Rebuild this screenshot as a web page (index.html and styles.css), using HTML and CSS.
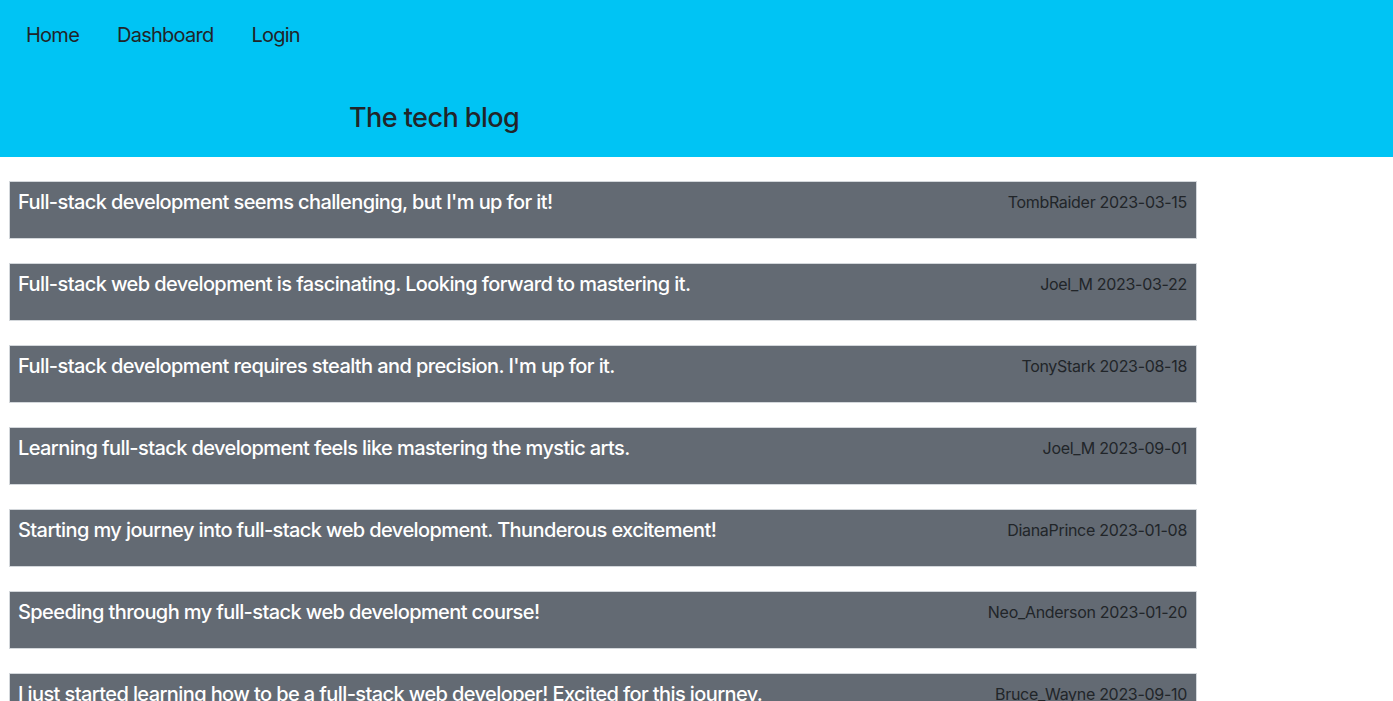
FILE: index.html
```html
<!DOCTYPE html>
<html lang="en">
<head>
<meta charset="utf-8">
<title>The tech blog</title>
<link rel="stylesheet" href="styles.css">
</head>
<body>
<header class="site-header">
  <nav class="nav">
    <a class="nav-link" href="#">Home</a>
    <a class="nav-link" href="#">Dashboard</a>
    <a class="nav-link" href="#">Login</a>
  </nav>
  <h1 class="site-title">The tech blog</h1>
</header>
<main class="posts">
  <article class="post">
    <h2 class="post-title">Full-stack development seems challenging, but I'm up for it!</h2>
    <span class="post-meta">TombRaider 2023-03-15</span>
  </article>
  <article class="post">
    <h2 class="post-title">Full-stack web development is fascinating. Looking forward to mastering it.</h2>
    <span class="post-meta">Joel_M 2023-03-22</span>
  </article>
  <article class="post">
    <h2 class="post-title">Full-stack development requires stealth and precision. I'm up for it.</h2>
    <span class="post-meta">TonyStark 2023-08-18</span>
  </article>
  <article class="post">
    <h2 class="post-title">Learning full-stack development feels like mastering the mystic arts.</h2>
    <span class="post-meta">Joel_M 2023-09-01</span>
  </article>
  <article class="post">
    <h2 class="post-title">Starting my journey into full-stack web development. Thunderous excitement!</h2>
    <span class="post-meta">DianaPrince 2023-01-08</span>
  </article>
  <article class="post">
    <h2 class="post-title">Speeding through my full-stack web development course!</h2>
    <span class="post-meta">Neo_Anderson 2023-01-20</span>
  </article>
  <article class="post">
    <h2 class="post-title">I just started learning how to be a full-stack web developer! Excited for this journey.</h2>
    <span class="post-meta">Bruce_Wayne 2023-09-10</span>
  </article>
</main>
</body>
</html>
```

FILE: styles.css
```css
* { box-sizing: border-box; }
html, body { margin: 0; padding: 0; }
body {
  font-family: Inter, "Noto Sans", "Liberation Sans", sans-serif;
  color: #212529;
  background: #fff;
}
.site-header {
  background: #00c4f4;
  height: 157px;
}
.nav {
  display: flex;
  gap: 38px;
  padding: 23px 0 0 26px;
}
.nav-link {
  color: #212529;
  text-decoration: none;
  font-size: 20px;
  line-height: 24px;
  letter-spacing: -0.75px;
}
.site-title {
  margin: 55px 0 0 349px;
  font-size: 27px;
  font-weight: 500;
  line-height: 32px;
  letter-spacing: -0.55px;
}
.posts {
  display: flex;
  flex-direction: column;
  gap: 24px;
  padding: 24px 0 0 9px;
  width: 1197px;
}
.post {
  display: flex;
  justify-content: space-between;
  align-items: flex-start;
  background: #636a73;
  border: 1px solid #d3d7db;
  height: 58px;
  padding: 8px 9px 0 8px;
}
.post-title {
  margin: 0;
  color: #fff;
  font-size: 20px;
  font-weight: 500;
  line-height: 24px;
  letter-spacing: -0.6px;
}
.post-meta {
  font-size: 16px;
  line-height: 24px;
  color: #212529;
  letter-spacing: -0.3px;
}
```
